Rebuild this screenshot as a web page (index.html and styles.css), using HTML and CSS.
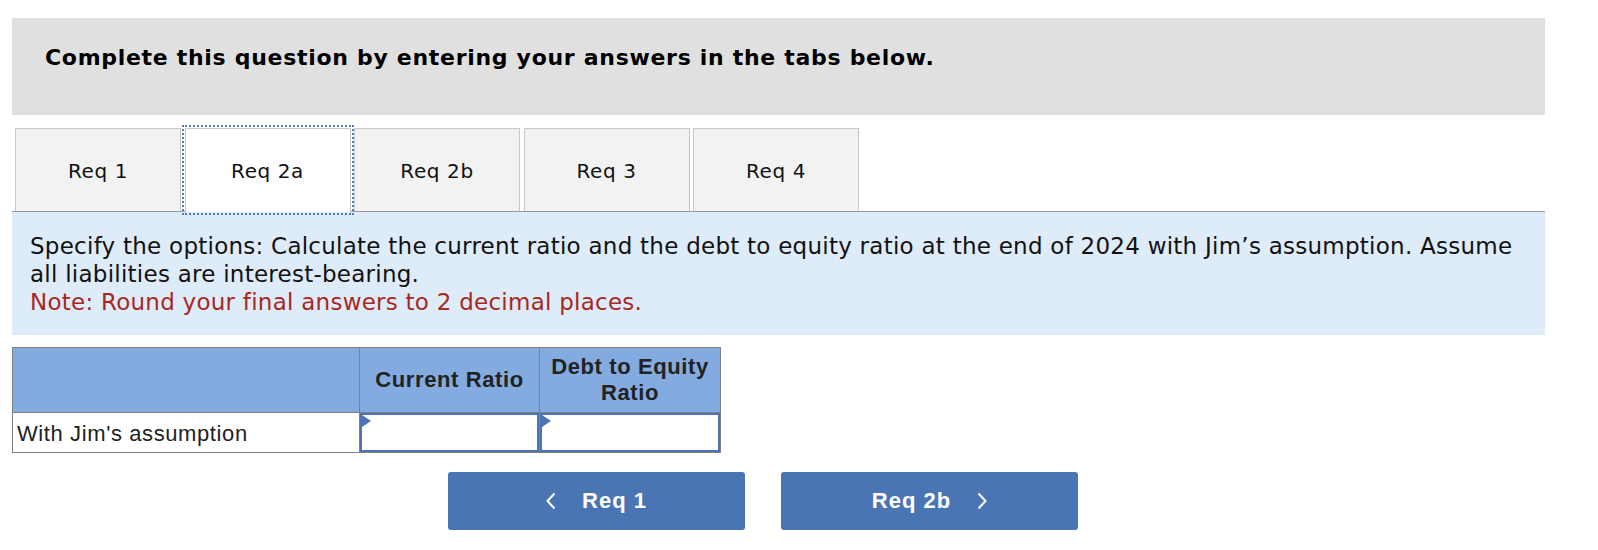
FILE: index.html
```html
<!DOCTYPE html>
<html>
<head>
<meta charset="utf-8">
<link rel="stylesheet" href="styles.css">
</head>
<body>
<div class="page">
  <div class="header">Complete this question by entering your answers in the tabs below.</div>
  <div class="tabs">
    <div class="tab">Req 1</div>
    <div class="tab active">Req 2a</div>
    <div class="tab">Req 2b</div>
    <div class="tab">Req 3</div>
    <div class="tab">Req 4</div>
  </div>
  <div class="panel">
    <p class="question">Specify the options: Calculate the current ratio and the debt to equity ratio at the end of 2024 with Jim’s assumption. Assume all liabilities are interest-bearing.</p>
    <p class="note">Note: Round your final answers to 2 decimal places.</p>
  </div>
  <table class="grid">
    <tr class="head">
      <th class="c1"></th>
      <th class="c2">Current Ratio</th>
      <th class="c3">Debt to Equity<br>Ratio</th>
    </tr>
    <tr class="row">
      <td class="label">With Jim's assumption</td>
      <td class="cell"><div class="input"><span class="flag"></span></div></td>
      <td class="cell"><div class="input"><span class="flag"></span></div></td>
    </tr>
  </table>
  <div class="nav">
    <div class="btn">
      <svg class="chev" width="10" height="18" viewBox="0 0 10 18"><polyline points="8.5,1.5 1.5,9 8.5,16.5" fill="none" stroke="#fff" stroke-width="2"/></svg>
      <span>Req 1</span>
    </div>
    <div class="btn">
      <span>Req 2b</span>
      <svg class="chev" width="10" height="18" viewBox="0 0 10 18"><polyline points="1.5,1.5 8.5,9 1.5,16.5" fill="none" stroke="#fff" stroke-width="2"/></svg>
    </div>
  </div>
</div>
</body>
</html>
```
FILE: styles.css
```css
* { box-sizing: border-box; }
body {
  margin: 0;
  background: #fff;
  font-family: "DejaVu Sans", Verdana, sans-serif;
  color: #111;
}
.page {
  width: 1533px;
  margin: 18px 0 0 12px;
}
.header {
  height: 97px;
  background: #e0e0e0;
  padding: 27px 0 0 33px;
  font-weight: bold;
  font-size: 22px;
  line-height: 26px;
  letter-spacing: 0.7px;
  color: #000;
}
.tabs {
  display: flex;
  gap: 3.5px;
  margin-top: 13px;
  padding-left: 3px;
  border-bottom: 1px solid #9a9a9a;
  height: 84px;
}
.tab {
  width: 166px;
  height: 83px;
  background: #f2f2f2;
  border: 1px solid #c8c8c8;
  border-bottom: none;
  display: flex;
  align-items: center;
  justify-content: center;
  font-size: 20px;
  letter-spacing: 0.6px;
  color: #111;
  padding-top: 2px;
}
.tab.active {
  background: #fff;
  height: 84px;
  padding-top: 1px;
  outline: 2px dotted #4f7bc1;
  outline-offset: 1px;
}
.panel {
  background: #deebf8;
  padding: 20px 25px 19px 18px;
  font-size: 23px;
  line-height: 28px;
  letter-spacing: 0.25px;
}
.panel p { margin: 0; }
.question { color: #111; }
.note { color: #a9271f; }
.grid {
  margin-top: 12px;
  border-collapse: collapse;
  font-family: "Liberation Sans", Arial, sans-serif;
  font-size: 22px;
  letter-spacing: 0.6px;
  color: #222;
}
.grid th, .grid td {
  border: 1px solid #808080;
  padding: 0;
}
.head th {
  background: #84abe0;
  height: 65px;
  font-weight: bold;
  line-height: 26px;
  text-align: center;
  vertical-align: middle;
}
.c1 { width: 347px; }
.c2 { width: 180px; }
.c3 { width: 181px; }
.row td { height: 40px; }
.label {
  padding-left: 4px !important;
  vertical-align: middle;
  padding-top: 2px !important;
}
.cell { vertical-align: top; }
.input {
  position: relative;
  height: 39px;
  border: 2px solid #4a74b3;
  background: #fff;
}
.flag {
  position: absolute;
  left: 0;
  top: 0;
  width: 0;
  height: 0;
  border-top: 6px solid transparent;
  border-bottom: 6px solid transparent;
  border-left: 9px solid #4a74b3;
}
.nav {
  display: flex;
  gap: 36px;
  margin-top: 19px;
  padding-left: 436px;
}
.btn {
  width: 297px;
  height: 58px;
  background: #4a75b4;
  border-radius: 3px;
  display: flex;
  align-items: center;
  justify-content: center;
  gap: 26px;
  color: #fff;
  font-family: "Liberation Sans", Arial, sans-serif;
  font-weight: bold;
  font-size: 22px;
  letter-spacing: 1px;
}
.chev { display: block; }
```
